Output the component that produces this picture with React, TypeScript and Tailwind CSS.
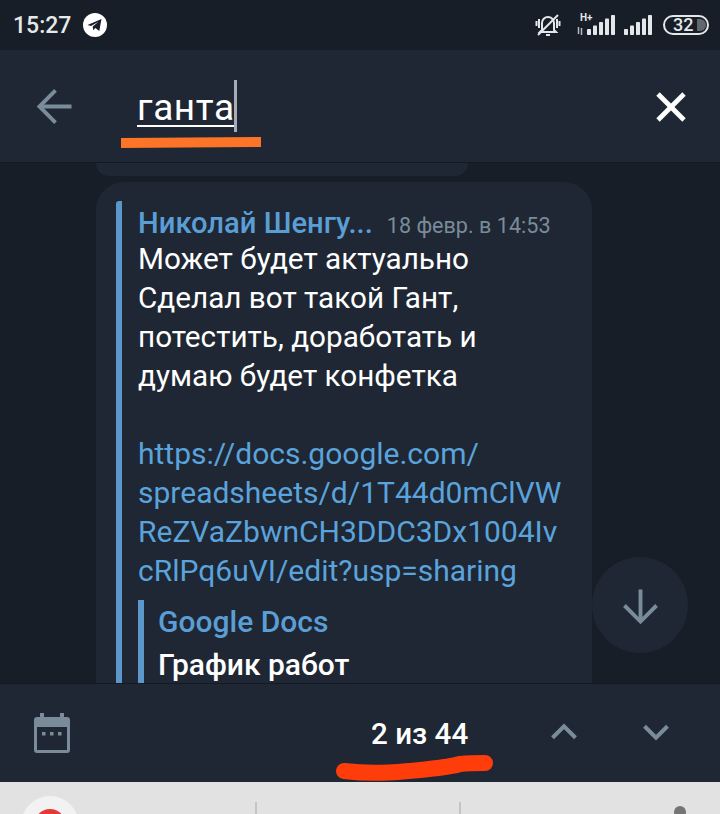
import React from 'react';
import { ArrowDown, ArrowLeft, ChevronDown, ChevronUp, X } from 'lucide-react';

const font = { fontFamily: 'Roboto, "Noto Sans", sans-serif' };

const Bars = () => (
  <svg width="28" height="20" viewBox="0 0 28 20" fill="#e4e7ea">
    {[0, 1, 2, 3, 4].map(i => (
      <rect key={i} x={i * 6} y={14 - i * 3.5} width="4" height={6 + i * 3.5} rx="0.8" />
    ))}
  </svg>
);

const StatusBar = () => (
  <div className="h-[50px] shrink-0 bg-[#171e28] flex items-center pl-[13px] pr-[11px] text-[#e6e8ea]">
    <span className="text-[23px] font-medium leading-none">15:27</span>
    <svg className="ml-[12px]" width="24" height="24" viewBox="0 0 24 24">
      <circle cx="12" cy="12" r="12" fill="#fff" />
      <path d="M4.5 12 18.5 6 16.3 18 12.3 15 10.2 17.2 9.7 13.6 15.5 8.7 8 13z" fill="#171e28" />
    </svg>
    <div className="ml-auto flex items-center">
      <svg width="26" height="24" viewBox="0 0 26 24" fill="none" stroke="#e4e7ea" strokeWidth="2">
        <path d="M7 17V10a6 6 0 0 1 12 0v7l2 2H5z" />
        <path d="M11 22h4" />
        <path d="M1.5 8v5M4 6v9M24.5 8v5M22 6v9" />
        <path d="M3 22 23 2" />
      </svg>
      <div className="ml-[16px] flex items-end h-[20px] relative">
        <svg width="6" height="8" viewBox="0 0 6 8" fill="none" stroke="#b4bac0" strokeWidth="1.5">
          <path d="M1.5 0v7M4.5 1v7" />
        </svg>
        <span className="absolute left-[3px] -top-[2px] text-[10px] font-bold leading-none">H+</span>
        <div className="ml-[4px]">
          <Bars />
        </div>
      </div>
      <div className="ml-[9px]">
        <Bars />
      </div>
      <div className="ml-[11px] w-[46px] h-[20px] rounded-full border-2 border-[#e4e7ea] flex items-center overflow-hidden">
        <span className="w-[31px] pl-[8px] text-left text-[18px] font-medium leading-none">32</span>
        <span className="ml-[1px] w-[9px] h-[12px] rounded-r-full bg-[#62686e]" />
      </div>
    </div>
  </div>
);

const SearchBar = () => (
  <div className="relative h-[112px] shrink-0 bg-[#1e2733] flex items-center">
    <ArrowLeft className="ml-[28px] text-[#7a8b99]" size={55} strokeWidth={1.7} strokeLinecap="butt" strokeLinejoin="miter" />
    <div className="ml-[54px] flex items-center">
      <span className="text-[37px] leading-[34px] pt-[5px] text-white tracking-[0.6px] border-b-2 border-white">ганта</span>
      <span className="w-[3px] h-[52px] bg-[#a4adb6] -ml-[1px]" />
    </div>
    <X className="ml-auto mr-[23px] mt-[2px] text-white" size={52} strokeWidth={2.2} strokeLinecap="butt" />
    {/* orange marker stroke drawn on the screenshot */}
    <svg className="absolute left-[121px] top-[87px]" width="140" height="11" viewBox="0 0 140 11">
      <polygon points="0,1 140,0 140,10 0,11" fill="#fb7427" />
    </svg>
  </div>
);

const Message = () => (
  <div className="relative flex-1 min-h-0 overflow-hidden bg-[#171e28] border-t border-[#141a22] pl-[96px]">
    <div className="w-[372px] h-[13px] bg-[#1e2733] rounded-b-[26px]" />
    <div className="mt-[6px] w-[496px] h-[560px] bg-[#1e2733] rounded-[28px] pt-[20px] pl-[20px]">
      <div className="border-l-[6px] border-[#5b97c9] rounded-t-[3px] pl-[16px] h-full">
        <div className="flex items-baseline h-[38px] -mt-[1px]">
          <span className="text-[29.2px] font-medium leading-[44px] text-[#5b9ed6] whitespace-nowrap">Николай Шенгу...</span>
          <span className="ml-[14px] text-[21.6px] leading-[44px] text-[#7a8b99] whitespace-nowrap">18 февр. в 14:53</span>
        </div>
        <div className="text-[29.7px] leading-[39px] text-white whitespace-nowrap">
          <div>Может будет актуально</div>
          <div>Сделал вот такой Гант,</div>
          <div>потестить, доработать и</div>
          <div>думаю будет конфетка</div>
          <div className="h-[39px]" />
          <div className="text-[30px] text-[#5ba3dc]">
            <div>https://docs.google.com/</div>
            <div>spreadsheets/d/1T44d0mClVW</div>
            <div>ReZVaZbwnCH3DDC3Dx1004Iv</div>
            <div>cRlPq6uVI/edit?usp=sharing</div>
          </div>
        </div>
        <div className="mt-[10px] border-l-[6px] border-[#5b97c9] pl-[14px] h-[120px]">
          <div className="text-[30px] font-medium leading-[44px] text-[#5b9ed6]">Google Docs</div>
          <div className="text-[30px] font-medium leading-[42px] text-white">График работ</div>
        </div>
      </div>
    </div>
    <div className="absolute left-[592px] top-[394px] w-[96px] h-[96px] rounded-full bg-[#1e2733] flex items-center justify-center">
      <ArrowDown className="text-[#7a8b99]" size={55} strokeWidth={1.7} strokeLinecap="butt" strokeLinejoin="miter" />
    </div>
  </div>
);

const BottomBar = () => (
  <div className="relative h-[99px] shrink-0 bg-[#1e2733] border-t border-[#141a22] flex items-center">
    <svg className="ml-[34px]" width="36" height="40" viewBox="0 0 36 40" fill="#7a8b99">
      <path d="M6 0h4v4h16V0h4v4h3a3 3 0 0 1 3 3v30a3 3 0 0 1-3 3H3a3 3 0 0 1-3-3V7a3 3 0 0 1 3-3h3zM3 14v23h30V14z" fillRule="evenodd" />
      <path d="M8 19h3.5v3.5H8zM16 19h3.5v3.5H16zM24 19h3.5v3.5H24z" />
    </svg>
    <span className="absolute left-[371px] top-[30px] text-[29.6px] font-medium leading-[40px] text-white whitespace-nowrap">2 из 44</span>
    <ChevronUp className="absolute left-[541px] top-[25px] text-[#7a8b99]" size={46} strokeWidth={2.1} strokeLinecap="butt" strokeLinejoin="miter" />
    <ChevronDown className="absolute left-[633px] top-[25px] text-[#7a8b99]" size={46} strokeWidth={2.1} strokeLinecap="butt" strokeLinejoin="miter" />
    {/* red marker stroke drawn on the screenshot */}
    <svg className="absolute left-[330px] top-[66px]" width="170" height="32" viewBox="0 0 170 32" fill="none">
      <path d="M14 21C40 24 60 23 90 20c18-2 30-3 40-6 10-1 20-1 25-1" stroke="#ff3d0a" strokeWidth="16" strokeLinecap="round" />
    </svg>
  </div>
);

const BrowserStub = () => (
  <div className="relative h-[32px] shrink-0 bg-[#e2e2e2] overflow-hidden">
    <div className="absolute left-[21px] top-[14px] w-[58px] h-[58px] rounded-full bg-[#f2f2f2] flex items-center justify-center">
      <div className="w-[32px] h-[32px] rounded-full bg-[#e53935]" />
    </div>
    <div className="absolute left-[255px] top-[20px] w-[2px] h-[12px] bg-[#c4c4c4]" />
    <div className="absolute left-[459px] top-[20px] w-[2px] h-[12px] bg-[#c4c4c4]" />
    <div className="absolute left-[674px] top-[24px] w-[12px] h-[12px] rounded-full bg-[#757575]" />
  </div>
);

const App: React.FC = () => {
  return (
    <div className="w-[720px] h-[814px] flex flex-col overflow-hidden" style={font}>
      <StatusBar />
      <SearchBar />
      <Message />
      <BottomBar />
      <BrowserStub />
    </div>
  );
};

export default App;
